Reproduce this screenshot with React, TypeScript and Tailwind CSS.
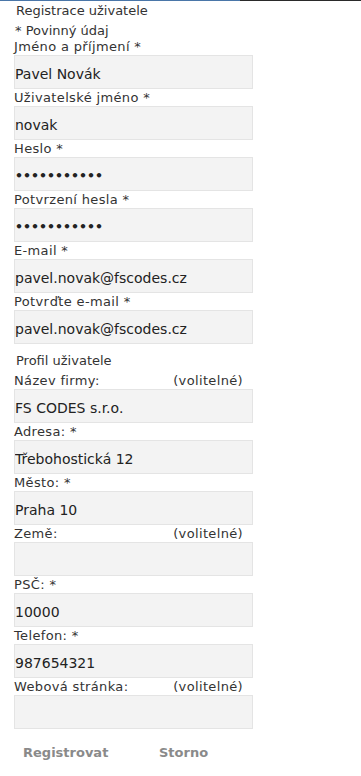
import { useState } from "react";

type Field = {
  label: string;
  value: string;
  type?: string;
  optional?: boolean;
};

const account: Field[] = [
  { label: "Jméno a příjmení *", value: "Pavel Novák" },
  { label: "Uživatelské jméno *", value: "novak" },
  { label: "Heslo *", value: "heslo123456", type: "password" },
  { label: "Potvrzení hesla *", value: "heslo123456", type: "password" },
  { label: "E-mail *", value: "pavel.novak@fscodes.cz" },
  { label: "Potvrďte e-mail *", value: "pavel.novak@fscodes.cz" },
];

const profile: Field[] = [
  { label: "Název firmy:", value: "FS CODES s.r.o.", optional: true },
  { label: "Adresa: *", value: "Třebohostická 12" },
  { label: "Město: *", value: "Praha 10" },
  { label: "Země:", value: "", optional: true },
  { label: "PSČ: *", value: "10000" },
  { label: "Telefon: *", value: "987654321" },
  { label: "Webová stránka:", value: "", optional: true },
];

function FormField({ field }: { field: Field }) {
  const [value, setValue] = useState(field.value);
  const isPassword = field.type === "password";
  return (
    <div>
      <div className="flex h-[17px] w-[229px] justify-between pt-[1px] text-[13px] leading-[16px] tracking-[0.35px] text-[#333]">
        <span>{field.label}</span>
        {field.optional && <span>(volitelné)</span>}
      </div>
      <input
        type={field.type ?? "text"}
        value={value}
        onChange={(e) => setValue(e.target.value)}
        className={
          isPassword
            ? "block h-[34px] w-[239px] border border-[#e4e4e4] bg-[#f3f3f3] px-0 pt-[3px] text-[12.5px] font-bold text-[#222] outline-none"
            : "block h-[34px] w-[239px] border border-[#e4e4e4] bg-[#f3f3f3] px-0 pt-[3px] text-[14px] text-[#222] outline-none"
        }
      />
    </div>
  );
}

export default function App() {
  return (
    <div className="min-h-[776px] bg-white font-['DejaVu_Sans',Verdana,sans-serif]">
      <div className="flex h-[1px]">
        <div className="w-[240px] bg-[#4a76a8]" />
        <div className="flex-1 bg-[#2a2a2a]" />
      </div>

      <div className="pl-[14px]">
        <h1 className="h-[20px] pl-[2px] pt-[2px] text-[13px] font-normal leading-[16px] text-[#333]">
          Registrace uživatele
        </h1>
        <p className="h-[17px] pl-[1px] pt-[2px] text-[13px] leading-[16px] text-[#333]">* Povinný údaj</p>

        {account.map((f) => (
          <FormField key={f.label} field={f} />
        ))}

        <h2 className="h-[28px] pl-[2px] pt-[9px] text-[13px] font-normal leading-[16px] text-[#333]">
          Profil uživatele
        </h2>

        {profile.map((f) => (
          <FormField key={f.label} field={f} />
        ))}

        <div className="mt-[16px] flex text-[13px] font-bold leading-[16px] text-[#8a8a8a]">
          <button className="ml-[9px] w-[136px] text-left">Registrovat</button>
          <button className="text-left">Storno</button>
        </div>
      </div>
    </div>
  );
}
